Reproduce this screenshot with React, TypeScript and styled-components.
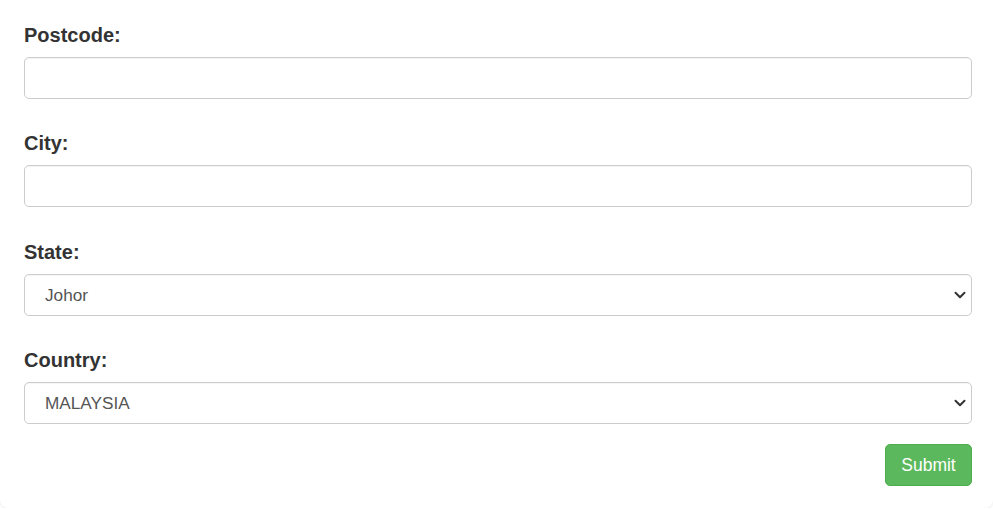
import React, { useState } from "react";
import styled, { createGlobalStyle } from "styled-components";

const STATES = [
  "Johor",
  "Kedah",
  "Kelantan",
  "Melaka",
  "Negeri Sembilan",
  "Pahang",
  "Perak",
  "Perlis",
  "Pulau Pinang",
  "Sabah",
  "Sarawak",
  "Selangor",
  "Terengganu",
  "Kuala Lumpur",
];
const COUNTRIES = ["MALAYSIA", "SINGAPORE", "BRUNEI", "INDONESIA", "THAILAND"];

const GlobalStyle = createGlobalStyle`
  html, body {
    margin: 0;
    padding: 0;
    background: #ffffff;
  }
  body {
    font-family: "Liberation Sans", Arial, sans-serif;
    color: #333;
  }
`;

const Chevron = () => (
  <ChevronIcon width="12" height="8" viewBox="0 0 12 8">
    <path
      d="M1.5 1.8 L6 6.2 L10.5 1.8"
      fill="none"
      stroke="#333"
      strokeWidth="2"
      strokeLinecap="round"
      strokeLinejoin="round"
    />
  </ChevronIcon>
);

const App = () => {
  const [postcode, setPostcode] = useState("");
  const [city, setCity] = useState("");
  const [state, setState] = useState("Johor");
  const [country, setCountry] = useState("MALAYSIA");

  return (
    <>
      <GlobalStyle />
      <Card onSubmit={(e) => e.preventDefault()}>
        <Group>
          <Label htmlFor="postcode">Postcode:</Label>
          <Input
            id="postcode"
            value={postcode}
            onChange={(e) => setPostcode(e.target.value)}
          />
        </Group>
        <Group>
          <Label htmlFor="city">City:</Label>
          <Input id="city" value={city} onChange={(e) => setCity(e.target.value)} />
        </Group>
        <Group>
          <Label htmlFor="state">State:</Label>
          <SelectWrap>
            <Select
              id="state"
              value={state}
              onChange={(e) => setState(e.target.value)}
            >
              {STATES.map((s) => (
                <option key={s}>{s}</option>
              ))}
            </Select>
            <Chevron />
          </SelectWrap>
        </Group>
        <Group $last>
          <Label htmlFor="country">Country:</Label>
          <SelectWrap>
            <Select
              id="country"
              value={country}
              onChange={(e) => setCountry(e.target.value)}
            >
              {COUNTRIES.map((c) => (
                <option key={c}>{c}</option>
              ))}
            </Select>
            <Chevron />
          </SelectWrap>
        </Group>
        <Actions>
          <SubmitButton type="submit">Submit</SubmitButton>
        </Actions>
      </Card>
    </>
  );
};

const Card = styled.form`
  box-sizing: border-box;
  width: 993px;
  height: 508px;
  padding: 24px 21px 22px 24px;
  background: #fff;
  border-radius: 0 0 8px 8px;
  box-shadow: 0 1px 3px rgba(0, 0, 0, 0.09);
  display: flex;
  flex-direction: column;
`;

const Group = styled.div<{ $last?: boolean }>`
  display: flex;
  flex-direction: column;
  margin-bottom: ${(p) => (p.$last ? "20px" : "33.4px")};
`;

const Label = styled.label`
  font-size: 20px;
  line-height: 23px;
  font-weight: 700;
  color: #333;
  margin-bottom: 10px;
`;

const fieldBase = `
  box-sizing: border-box;
  width: 100%;
  height: 42px;
  border: 1px solid #ccc;
  border-radius: 5px;
  background: #fff;
  font-family: "Liberation Sans", Arial, sans-serif;
  font-size: 17.2px;
  color: #555;
  outline: none;
  box-shadow: inset 0 1px 1px rgba(0, 0, 0, 0.04);
`;

const Input = styled.input`
  ${fieldBase}
  padding: 0 20px;
`;

const SelectWrap = styled.div`
  position: relative;
  width: 100%;
`;

const Select = styled.select`
  ${fieldBase}
  appearance: none;
  -webkit-appearance: none;
  padding: 0 40px 0 20px;
  display: block;
`;

const ChevronIcon = styled.svg`
  position: absolute;
  right: 6px;
  top: 50%;
  margin-top: -4px;
  pointer-events: none;
`;

const Actions = styled.div`
  display: flex;
  justify-content: flex-end;
`;

const SubmitButton = styled.button`
  box-sizing: border-box;
  width: 87px;
  height: 42px;
  border: 1px solid #4cae4c;
  border-radius: 5px;
  background: #5cb85c;
  color: #fff;
  font-family: "Liberation Sans", Arial, sans-serif;
  font-size: 17.5px;
  cursor: pointer;
`;

export default App;
